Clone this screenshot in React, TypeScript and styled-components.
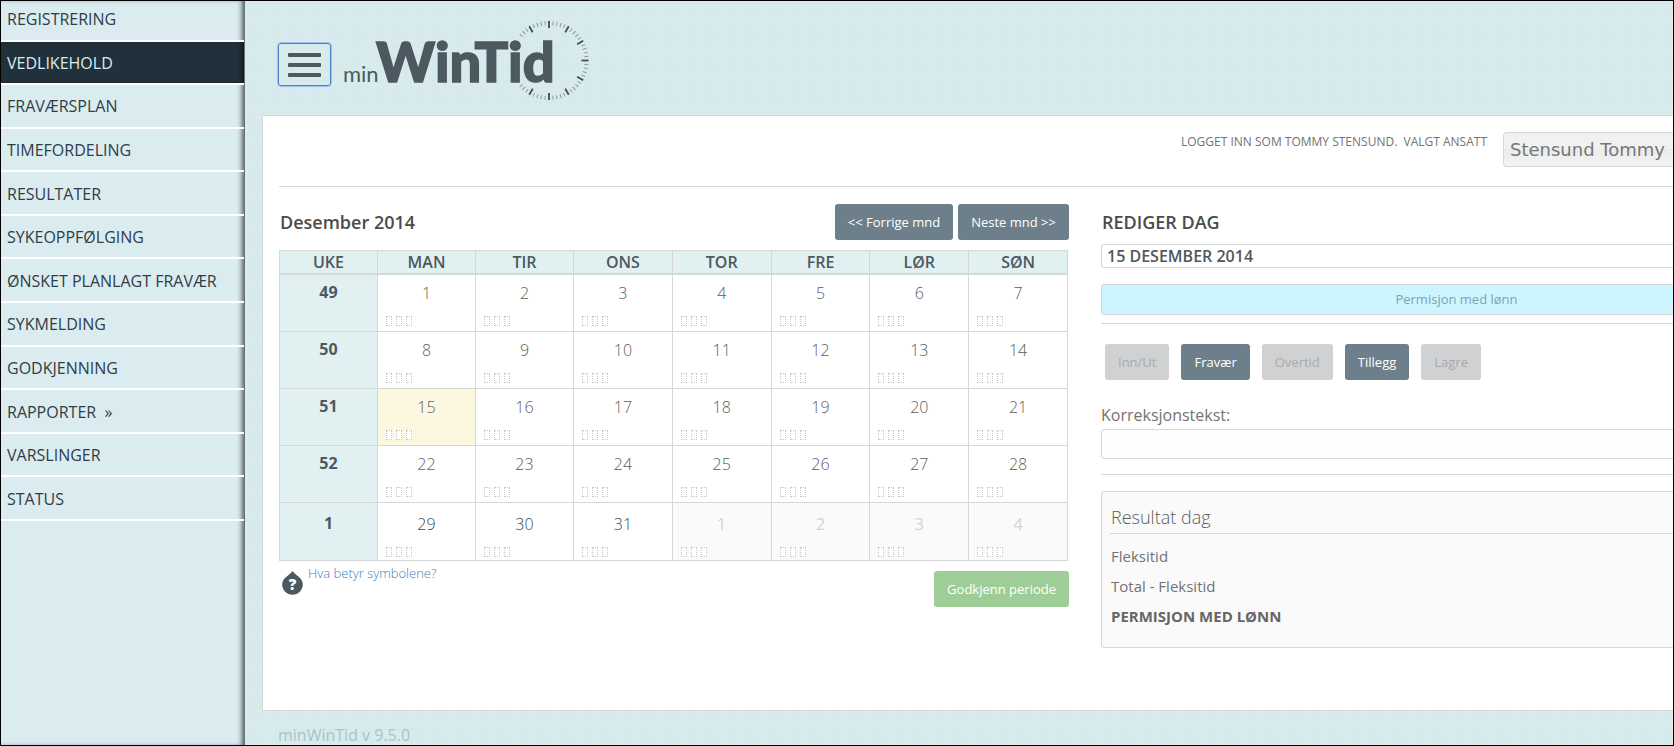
import React from "react";
import styled, { createGlobalStyle, css } from "styled-components";

const GlobalStyle = createGlobalStyle`
  *, *::before, *::after { box-sizing: border-box; }
  body {
    margin: 0;
    background: #d8ebec;
    color: #5c5c5c;
    font: 300 16px/24px "Open Sans", "Noto Sans", sans-serif;
  }
`;

const line = "#d6d7d8";
const slate = "#4c5960";

const Page = styled.div`
  display: flex;
  min-height: 100vh;
  max-height: 100vh;
  overflow: hidden;
  border: 1px solid #000;
`;

const Sidebar = styled.nav`
  flex: 0 0 244px;
  background: #dbecf0;
  box-shadow: inset -5px 0 5px -2px #4d5b5d;
`;

const Menu = styled.ul`
  display: grid;
  grid-auto-rows: 1fr;
  height: 523px;
  margin: -3px 1px 0 0;
  padding: 0;
  list-style: none;
`;

const MenuItem = styled.li`
  border-bottom: 2px solid #fff;
`;

const MenuLink = styled.a<{ $active?: boolean }>`
  display: flex;
  align-items: center;
  height: 100%;
  padding: 1px 0 0 6px;
  color: #2f3d47;
  font-weight: 400;
  text-decoration: none;
  white-space: pre;
  ${(p) =>
    p.$active &&
    css`
      background: #22303b;
      color: #dbecf0;
      box-shadow: inset -5px 0 5px -3px #10181d;
    `}
`;

const Main = styled.main`
  flex: 1 1 0;
  min-width: 0;
  overflow: hidden;
  padding-left: 17px;
  background:
    repeating-linear-gradient(0deg, rgba(255, 255, 255, 0.06) 0 1px, transparent 1px 4px, rgba(180, 215, 235, 0.08) 4px 5px, transparent 5px 11px),
    repeating-linear-gradient(90deg, rgba(255, 255, 255, 0.07) 0 1px, transparent 1px 5px, rgba(180, 215, 235, 0.08) 5px 6px, transparent 6px 13px),
    #d8ebec;
`;

const Header = styled.header`
  display: flex;
  align-items: flex-start;
  gap: 11px;
  height: 114px;
  padding-left: 15px;
`;

const MenuButton = styled.button`
  display: flex;
  flex-direction: column;
  justify-content: center;
  gap: 6px;
  width: 55px;
  height: 45px;
  margin: 41px 0 0;
  padding: 0 10px;
  background: transparent;
  border: 1px solid #9cc3f5;
  border-radius: 4px;
  box-shadow: inset 0 0 0 1px #4f7fc4;
`;

const Bar = styled.span`
  height: 4px;
  border-radius: 1px;
  background: ${slate};
`;

const LogoSvg = styled.svg`
  display: block;
  margin-top: 14px;
`;

const Panel = styled.section`
  min-height: 596px;
  padding: 16px 0 0 16px;
  background: #fff;
  border: 1px solid ${line};
  border-right: 0;
`;

const UserBar = styled.div`
  display: flex;
  justify-content: flex-end;
  gap: 16px;
  height: 55px;
  border-bottom: 1px solid ${line};
`;

const UserLabel = styled.label`
  color: #737373;
  font-size: 12px;
  font-weight: 400;
  line-height: 20px;
  text-transform: uppercase;
  white-space: pre;
`;

const EmployeeSelect = styled.select`
  appearance: none;
  width: 170px;
  height: 35px;
  padding: 0 6px;
  background: linear-gradient(#f1f1f1 50%, #ebebeb 50%, #f3f3f3);
  border: 1px solid ${line};
  border-right: 0;
  border-radius: 4px 0 0 4px;
  color: #777;
  font: 18px "DejaVu Sans", sans-serif;
`;

const Columns = styled.div`
  display: grid;
  grid-template-columns: 790fr 711fr;
  gap: 32px;
  min-width: 1533px;
`;

const Column = styled.div`
  padding-top: 17px;
`;

const TitleRow = styled.div`
  display: flex;
  align-items: center;
  gap: 5px;
  height: 36px;
`;

const Title = styled.h2`
  margin: 0 auto 0 1px;
  color: #4b4b4b;
  font-size: 18px;
  font-weight: 600;
`;

const Button = styled.button<{ $tone?: "green" }>`
  height: 36px;
  padding: 0 13px;
  border: 0;
  border-radius: 3px;
  background: ${(p) => (p.$tone === "green" ? "#9fcd98" : "#6c7f8a")};
  color: #fff;
  font: 500 13px/18px "Open Sans", sans-serif;
  white-space: nowrap;
  &:disabled {
    background: #d0d1d3;
    color: #a8aaab;
    font-weight: 400;
  }
`;

const Calendar = styled.table`
  width: 789px;
  margin-top: 10px;
  border-collapse: collapse;
  table-layout: fixed;
`;

const HeadCell = styled.th`
  height: 23px;
  padding: 2px 0 0;
  background: #e1f1f1;
  border: 1px solid ${line};
  border-bottom-width: 2px;
  color: ${slate};
  font-weight: 600;
  line-height: 19px;
  &:nth-child(-n + 3) {
    width: 98px;
  }
`;

const WeekCell = styled.th<{ $last?: boolean }>`
  padding: ${(p) => (p.$last ? 9 : 6)}px 0 0;
  background: #e1f1f1;
  border: 1px solid ${line};
  color: ${slate};
  font-weight: 700;
  line-height: 22px;
  vertical-align: top;
`;

const DayCell = styled.td<{ $selected?: boolean; $outside?: boolean; $first?: boolean; $last?: boolean }>`
  height: ${(p) => (p.$last || p.$first ? 58 : 57)}px;
  padding: ${(p) => (p.$last ? 10 : 7)}px 0 0;
  border: 1px solid ${line};
  background: ${(p) => (p.$selected ? "#fcf8df" : p.$outside ? "#fafafa" : "#fff")};
  color: ${(p) => (p.$outside ? "#d3d3d3" : p.$last ? "#3f4c53" : "#5c5c5c")};
  font-weight: ${(p) => (p.$outside ? 400 : 300)};
  line-height: 22px;
  text-align: center;
  vertical-align: top;
`;

const Marks = styled.div`
  display: flex;
  gap: 4px;
  padding: 12px 0 0 8px;
`;

const Mark = styled.span`
  width: 6px;
  height: 10px;
  background: #fff;
  border: 1px dotted #c8c8c8;
`;

const CalendarFooter = styled.div`
  display: flex;
  align-items: flex-start;
  justify-content: space-between;
  margin-top: 10px;
`;

const HelpLink = styled.a`
  display: flex;
  gap: 5px;
  padding-left: 3px;
  color: #4080bb;
  font-size: 13px;
  line-height: 4px;
  text-decoration: none;
`;

const DateInput = styled.input`
  display: block;
  width: 100%;
  height: 24px;
  margin-top: 4px;
  padding: 0 5px;
  border: 1px solid ${line};
  border-radius: 3px;
  color: ${slate};
  font: 600 16px/22px "Open Sans", sans-serif;
`;

const Absence = styled.div`
  height: 31px;
  margin: 16px 0 8px;
  background: #cdf5ff;
  border: 1px solid ${line};
  border-radius: 3px;
  color: #7ba4ad;
  font-size: 13px;
  font-weight: 400;
  line-height: 29px;
  text-align: center;
`;

const Actions = styled.div`
  display: flex;
  gap: 12px;
  padding: 20px 4px 0;
  border-top: 1px solid ${line};
`;

const FieldLabel = styled.label`
  display: block;
  margin: 23px 0 2px;
  color: #737373;
  font-weight: 400;
`;

const TextInput = styled.input`
  display: block;
  width: 100%;
  height: 30px;
  padding: 0 5px;
  background: #fdfdfd;
  border: 1px solid ${line};
  border-radius: 3px;
`;

const Divider = styled.hr`
  height: 1px;
  margin: 15px 0 16px;
  border: 0;
  background: ${line};
`;

const ResultBox = styled.section`
  height: 157px;
  padding: 13px 0 0 8px;
  background: #fafafa;
  border: 1px solid ${line};
  border-radius: 3px;
`;

const ResultTitle = styled.h3`
  margin: 0 0 7px;
  padding: 0 0 4px 1px;
  border-bottom: 1px solid ${line};
  font-size: 18px;
  font-weight: 300;
`;

const ResultRow = styled.p<{ $strong?: boolean }>`
  margin: 0 0 0 1px;
  color: ${(p) => (p.$strong ? "#666" : "#737373")};
  font-size: 15px;
  line-height: 30px;
  font-weight: ${(p) => (p.$strong ? 700 : 400)};
`;

const Footer = styled.footer`
  padding: 12px 0 0 16px;
  color: #a9c3ca;
  font-weight: 400;
`;

const menu = [
  "REGISTRERING",
  "VEDLIKEHOLD",
  "FRAVÆRSPLAN",
  "TIMEFORDELING",
  "RESULTATER",
  "SYKEOPPFØLGING",
  "ØNSKET PLANLAGT FRAVÆR",
  "SYKMELDING",
  "GODKJENNING",
  "RAPPORTER  »",
  "VARSLINGER",
  "STATUS",
];

const weekdays = ["UKE", "MAN", "TIR", "ONS", "TOR", "FRE", "LØR", "SØN"];
const weeks = [49, 50, 51, 52, 1];

function Logo() {
  const ticks = [];
  for (let m = -8; m <= 38; m++) {
    const major = m % 5 === 0;
    ticks.push(
      <line
        key={m}
        x1="0"
        y1="-39.5"
        x2="0"
        y2={major ? -32.5 : -35.5}
        stroke={major ? "#3f4c53" : "#8b999d"}
        strokeWidth={major ? 1.8 : 1}
        transform={`translate(206 45.5) rotate(${m * 6})`}
      />
    );
  }
  return (
    <LogoSvg width="250" height="90" role="img" aria-label="minWinTid">
      {ticks}
      <text x="0" y="67" fill={slate} fontFamily="Lato" fontSize="22" fontWeight="400">
        min
      </text>
      <text x="33" y="67" fill={slate} fontFamily="Lato" fontSize="56" fontWeight="900" stroke={slate} strokeWidth="1.5">
        WinTid
      </text>
    </LogoSvg>
  );
}

function HelpIcon() {
  return (
    <svg width="21" height="24" viewBox="0 0 21 24" aria-hidden="true">
      <path
        d="M10.500 0C12 2.500 15.500 4.500 18 7C20 9 20.800 11.200 20.800 13.600C20.800 19.400 16.200 23.800 10.500 23.800S.2 19.400.2 13.600C.2 11.200 1 9 3 7C5.500 4.500 9 2.500 10.500 0Z"
        fill={slate}
      />
      <text x="10.500" y="18.500" textAnchor="middle" fill="#fff" fontFamily="Open Sans" fontSize="15" fontWeight="800">
        ?
      </text>
    </svg>
  );
}

export default function App() {
  return (
    <>
      <GlobalStyle />
      <Page>
        <Sidebar>
          <Menu>
            {menu.map((label) => (
              <MenuItem key={label}>
                <MenuLink href="#" $active={label === "VEDLIKEHOLD"}>
                  {label}
                </MenuLink>
              </MenuItem>
            ))}
          </Menu>
        </Sidebar>
        <Main>
          <Header>
            <MenuButton type="button" aria-label="Meny">
              <Bar />
              <Bar />
              <Bar />
            </MenuButton>
            <Logo />
          </Header>
          <Panel>
            <UserBar>
              <UserLabel htmlFor="employee">Logget inn som Tommy Stensund.  Valgt ansatt</UserLabel>
              <EmployeeSelect id="employee">
                <option>Stensund Tommy</option>
              </EmployeeSelect>
            </UserBar>
            <Columns>
              <Column>
                <TitleRow>
                  <Title>Desember 2014</Title>
                  <Button type="button">&lt;&lt; Forrige mnd</Button>
                  <Button type="button">Neste mnd &gt;&gt;</Button>
                </TitleRow>
                <Calendar>
                  <thead>
                    <tr>
                      {weekdays.map((d) => (
                        <HeadCell key={d} scope="col">
                          {d}
                        </HeadCell>
                      ))}
                    </tr>
                  </thead>
                  <tbody>
                    {weeks.map((week, w) => {
                      const last = w === weeks.length - 1;
                      return (
                        <tr key={week}>
                          <WeekCell scope="row" $last={last}>
                            {week}
                          </WeekCell>
                          {[1, 2, 3, 4, 5, 6, 7].map((d) => {
                            const n = w * 7 + d;
                            return (
                              <DayCell
                                key={d}
                                $first={w === 0}
                                $last={last}
                                $selected={n === 15}
                                $outside={n > 31}
                              >
                                {n > 31 ? n - 31 : n}
                                <Marks>
                                  <Mark />
                                  <Mark />
                                  <Mark />
                                </Marks>
                              </DayCell>
                            );
                          })}
                        </tr>
                      );
                    })}
                  </tbody>
                </Calendar>
                <CalendarFooter>
                  <HelpLink href="#">
                    <HelpIcon />
                    Hva betyr symbolene?
                  </HelpLink>
                  <Button type="button" $tone="green">
                    Godkjenn periode
                  </Button>
                </CalendarFooter>
              </Column>
              <Column>
                <TitleRow>
                  <Title>REDIGER DAG</Title>
                </TitleRow>
                <DateInput aria-label="Dato" defaultValue="15 DESEMBER 2014" />
                <Absence>Permisjon med lønn</Absence>
                <Actions>
                  <Button type="button" disabled>Inn/Ut</Button>
                  <Button type="button">Fravær</Button>
                  <Button type="button" disabled>Overtid</Button>
                  <Button type="button">Tillegg</Button>
                  <Button type="button" disabled>Lagre</Button>
                </Actions>
                <FieldLabel htmlFor="correction">Korreksjonstekst:</FieldLabel>
                <TextInput id="correction" />
                <Divider />
                <ResultBox>
                  <ResultTitle>Resultat dag</ResultTitle>
                  <ResultRow>Fleksitid</ResultRow>
                  <ResultRow>Total - Fleksitid</ResultRow>
                  <ResultRow $strong>PERMISJON MED LØNN</ResultRow>
                </ResultBox>
              </Column>
            </Columns>
          </Panel>
          <Footer>minWinTid v 9.5.0</Footer>
        </Main>
      </Page>
    </>
  );
}
